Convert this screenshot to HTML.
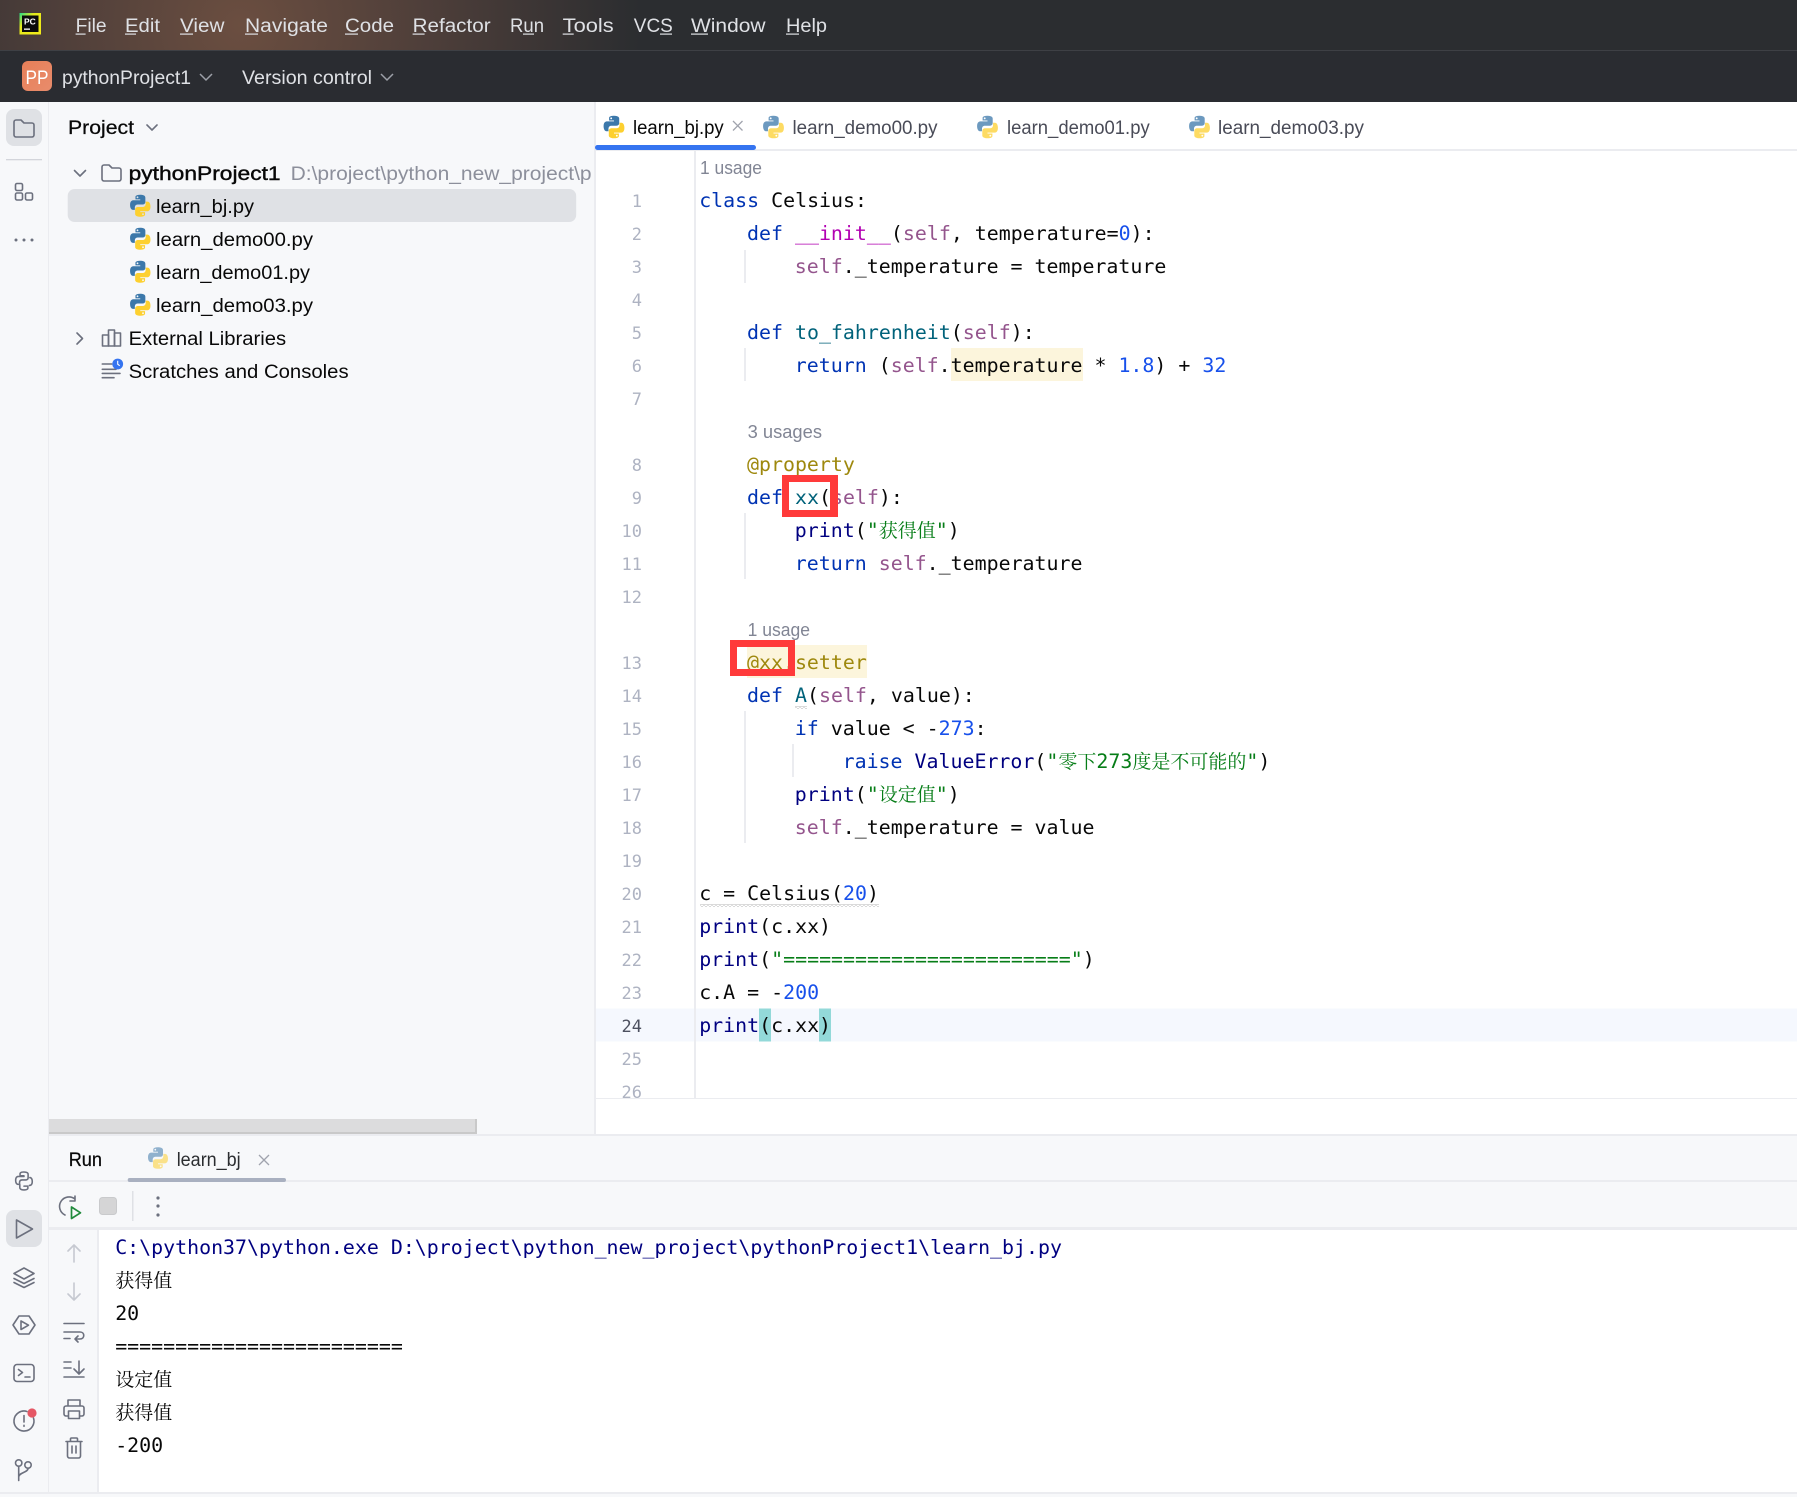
<!DOCTYPE html>
<html lang="zh"><head><meta charset="utf-8"><title>PyCharm</title>
<style>
html,body{margin:0;padding:0;background:#fff;width:1797px;height:1497px;overflow:hidden}
svg{display:block;white-space:pre}
.u{font-family:"Liberation Sans","Noto Sans CJK SC",sans-serif;font-size:19px}
.m{font-family:"DejaVu Sans Mono","Noto Serif CJK SC",monospace;font-size:19.92px;fill:#080808}
.n{font-family:"DejaVu Sans Mono",monospace;font-size:17px;fill:#aeb3c2;text-anchor:end}
.c{font-family:"Noto Serif CJK SC",serif;font-size:19px}
.k{fill:#0033b3}.s{fill:#94558d}.f{fill:#00627a}.d{fill:#b200b2}.b{fill:#000080}.i{fill:#1750eb}.g{fill:#067d17}.a{fill:#9e880d}
.h{font-family:"Liberation Sans",sans-serif;font-size:18px;fill:#818594}
.w{fill:#dfe1e5}.t{fill:#080808}.p{fill:#494b57}
.ic{fill:none;stroke:#6c707e;stroke-width:1.6;stroke-linecap:round;stroke-linejoin:round}
.dis{fill:none;stroke:#c6c9d1;stroke-width:1.6;stroke-linecap:round;stroke-linejoin:round}
</style></head><body>
<svg width="1797" height="1497" viewBox="0 0 1797 1497" xmlns="http://www.w3.org/2000/svg">
<defs>
<radialGradient id="tb" gradientUnits="userSpaceOnUse" cx="240" cy="25" r="400"><stop offset="0" stop-color="#6b4e40"/><stop offset=".45" stop-color="#4f3f3a"/><stop offset="1" stop-color="#2b2d30"/></radialGradient>
<linearGradient id="pc" x1="0" y1="0" x2="1" y2="1"><stop offset="0" stop-color="#21d789"/><stop offset=".35" stop-color="#e6ea1c"/><stop offset="1" stop-color="#f2ea1a"/></linearGradient>
<linearGradient id="pp" x1="0" y1="0" x2="1" y2="1"><stop offset="0" stop-color="#e77f58"/><stop offset="1" stop-color="#e88c6c"/></linearGradient>
<symbol id="py" viewBox="0 0 24 24">
<path fill="#3c78aa" fill-rule="evenodd" d="M11.9 1.2C6.9 1.2 7.3 3.4 7.3 3.4v2.4H12v.8H5.4S2 6.2 2 11.2s2.9 4.9 2.9 4.9h1.8v-2.4s-.1-2.9 2.9-2.9h4.7s2.7 0 2.7-2.6V4s.4-2.8-5.1-2.8zM9.3 2.8a.9.9 0 1 1 0 1.8.9.9 0 0 1 0-1.8z"/>
<path fill="#fdd02f" fill-rule="evenodd" d="M12.1 22.8c5 0 4.6-2.2 4.6-2.2v-2.4H12v-.8h6.6s3.4.4 3.4-4.6-2.9-4.9-2.9-4.9h-1.8v2.4s.1 2.9-2.9 2.9H9.7s-2.7 0-2.7 2.6V20s-.4 2.8 5.1 2.8zM14.7 21.2a.9.9 0 1 1 0-1.8.9.9 0 0 1 0 1.8z"/>
</symbol>
<pattern id="wv" width="4" height="3" patternUnits="userSpaceOnUse"><path d="M0 2.5L2 .5L4 2.5" fill="none" stroke="#b4b4b4" stroke-width=".7"/></pattern>
</defs>

<!-- backgrounds -->
<rect width="1797" height="1497" fill="#fff"/>
<rect width="1797" height="50" fill="#2b2d30"/>
<rect width="800" height="50" fill="url(#tb)"/>
<rect y="50" width="1797" height="1" fill="#3e4045"/>
<rect y="51" width="1797" height="51" fill="#2a2c31"/>
<rect y="102" width="595" height="1032" fill="#f7f8fa"/>
<rect y="102" width="49" height="1395" fill="#f7f8fa"/>
<rect x="48" y="102" width="1" height="1395" fill="#ebecf0"/>
<rect x="594" y="102" width="2" height="1032" fill="#ebecf0"/>
<rect x="596" y="149" width="1201" height="2" fill="#ebecf0"/>
<rect x="694" y="151" width="2" height="947" fill="#ebecf0"/>
<rect x="596" y="1098" width="1201" height="1" fill="#ebecf0"/>
<rect x="49" y="1134" width="1748" height="95" fill="#f7f8fa"/>
<rect x="49" y="1134" width="1748" height="2" fill="#ebecf0"/>
<rect x="49" y="1180" width="1748" height="2" fill="#ebecf0"/>
<rect x="49" y="1227" width="1748" height="3" fill="#ebecf0"/>
<rect x="49" y="1230" width="48" height="262" fill="#f7f8fa"/>
<rect x="97" y="1230" width="2" height="262" fill="#ebecf0"/>
<rect y="1492" width="1797" height="2" fill="#ebecf0"/>
<rect y="1494" width="1797" height="3" fill="#f7f8fa"/>
<rect x="49" y="1119" width="428" height="15" fill="#c9c9c9"/>
<rect x="49" y="1119" width="426" height="13" fill="#dcdcdd"/>

<!-- title bar -->
<rect x="19.5" y="13" width="21.5" height="21.5" fill="url(#pc)"/>
<rect x="22" y="15.5" width="16.5" height="16.5" fill="#0b0b0b"/>
<text x="24" y="24.5" font-family="Liberation Sans,sans-serif" font-size="8.5" font-weight="700" fill="#fff">PC</text>
<rect x="24" y="28.5" width="6" height="1.3" fill="#fff"/>
<text x="75.6" y="32" textLength="31" lengthAdjust="spacingAndGlyphs" class="u w">File</text>
<text x="125" y="32" textLength="35" lengthAdjust="spacingAndGlyphs" class="u w">Edit</text>
<text x="180" y="32" textLength="44.5" lengthAdjust="spacingAndGlyphs" class="u w">View</text>
<text x="245" y="32" textLength="83" lengthAdjust="spacingAndGlyphs" class="u w">Navigate</text>
<text x="345" y="32" textLength="49" lengthAdjust="spacingAndGlyphs" class="u w">Code</text>
<text x="412.6" y="32" textLength="78" lengthAdjust="spacingAndGlyphs" class="u w">Refactor</text>
<text x="510" y="32" textLength="34" lengthAdjust="spacingAndGlyphs" class="u w">Run</text>
<text x="562.7" y="32" textLength="51" lengthAdjust="spacingAndGlyphs" class="u w">Tools</text>
<text x="633.8" y="32" textLength="39" lengthAdjust="spacingAndGlyphs" class="u w">VCS</text>
<text x="691" y="32" textLength="74.5" lengthAdjust="spacingAndGlyphs" class="u w">Window</text>
<text x="786" y="32" textLength="41" lengthAdjust="spacingAndGlyphs" class="u w">Help</text>
<g fill="#dfe1e5">
<rect x="75.6" y="33.5" width="10" height="1.2"/><rect x="125" y="33.5" width="11" height="1.2"/><rect x="180" y="33.5" width="13" height="1.2"/><rect x="245" y="33.5" width="13" height="1.2"/><rect x="345" y="33.5" width="13" height="1.2"/><rect x="412.6" y="33.5" width="12" height="1.2"/><rect x="523" y="33.5" width="11" height="1.2"/><rect x="562.7" y="33.5" width="11" height="1.2"/><rect x="660" y="33.5" width="12" height="1.2"/><rect x="691" y="33.5" width="17" height="1.2"/><rect x="786" y="33.5" width="13" height="1.2"/>
</g>
<rect x="22" y="61" width="30" height="30" rx="6" fill="url(#pp)"/>
<text x="25.5" y="84" textLength="23" lengthAdjust="spacingAndGlyphs" class="u" fill="#fff">PP</text>
<text x="62" y="84" textLength="129" lengthAdjust="spacingAndGlyphs" class="u w">pythonProject1</text>
<text x="242" y="84" textLength="130" lengthAdjust="spacingAndGlyphs" class="u w">Version control</text>
<path d="M200 74l6 6 6-6M381 74l6 6 6-6" fill="none" stroke="#9da0a8" stroke-width="1.5"/>

<!-- left stripe -->
<rect x="6" y="109" width="36" height="37" rx="8" fill="#dfe1e5"/>
<path class="ic" d="M14 122a2 2 0 0 1 2-2h5l3 3h8a2 2 0 0 1 2 2v10a2 2 0 0 1-2 2H16a2 2 0 0 1-2-2z"/>
<rect x="6" y="159" width="36" height="1.3" fill="#d3d5db"/>
<g class="ic"><rect x="15.5" y="183.5" width="7" height="7" rx="1.5"/><rect x="15.5" y="193" width="7" height="7" rx="1.5"/><rect x="25.5" y="193" width="7" height="7" rx="1.5"/></g>
<g fill="#6c707e"><circle cx="16" cy="240" r="1.5"/><circle cx="24" cy="240" r="1.5"/><circle cx="32" cy="240" r="1.5"/></g>

<g class="ic">
<g transform="translate(14 1171) scale(.83)"><path d="M11.9 1.2C6.9 1.2 7.3 3.4 7.3 3.4v2.4H12v.8H5.4S2 6.2 2 11.2s2.9 4.9 2.9 4.9h1.8v-2.4s-.1-2.9 2.9-2.9h4.7s2.7 0 2.7-2.6V4s.4-2.8-5.1-2.8z" stroke-width="1.9"/><path d="M12.1 22.8c5 0 4.6-2.2 4.6-2.2v-2.4H12M19.1 7.9s2.9-.1 2.9 4.9-3.4 4.6-3.4 4.6M7 16.5V20s-.4 2.8 5.1 2.8" stroke-width="1.9"/></g>
</g>
<rect x="6" y="1210" width="36" height="37" rx="8" fill="#dfe1e5"/>
<g class="ic">
<path d="M16.5 1220v18l16-9z"/>
<path d="M24 1268l10 5.5-10 5.5-10-5.5z"/><path d="M14 1278.5l10 5 10-5M14 1282.5l10 5 10-5" />
<path d="M19 1316h10l6 9-6 9H19l-6-9z"/><path d="M21 1321v8.5l7.5-4.3z"/>
<rect x="14" y="1364.5" width="20" height="17" rx="3"/><path d="M18.5 1369.5l4 3-4 3M25 1377h5"/>
<path d="M27 1411.5a10 10 0 1 0 6.5 6.5"/><path d="M24 1415.5v6.5M24 1425.3v1"/>
<circle cx="18.7" cy="1463" r="3.2"/><circle cx="28" cy="1465" r="3.2"/><path d="M18.7 1466.500v14M28 1468.500c0 4-9.300 4-9.300 8.500"/>
</g>
<circle cx="32" cy="1413" r="4.6" fill="#e55765"/>

<!-- project panel -->
<text x="68" y="134" textLength="66" lengthAdjust="spacingAndGlyphs" class="u t" stroke="#080808" stroke-width=".25">Project</text>
<path class="ic" d="M147 125l5 5 5-5"/>
<rect x="67.7" y="189" width="508.5" height="33" rx="7" fill="#dfe1e5"/>
<path class="ic" d="M74.5 170.5l5.5 5.5 5.5-5.5"/>
<path class="ic" d="M102 167a2 2 0 0 1 2-2h5l3 3h7a2 2 0 0 1 2 2v9a2 2 0 0 1-2 2h-15a2 2 0 0 1-2-2z"/>
<text x="128.6" y="180" textLength="152" lengthAdjust="spacingAndGlyphs" class="u t" stroke="#080808" stroke-width=".4">pythonProject1</text>
<text x="290.6" y="180" textLength="301" lengthAdjust="spacingAndGlyphs" class="u" fill="#8c8f9b">D:\project\python_new_project\p</text>
<use href="#py" x="128" y="193.5" width="24.5" height="24.5"/>
<use href="#py" x="128" y="226.5" width="24.5" height="24.5"/>
<use href="#py" x="128" y="259.5" width="24.5" height="24.5"/>
<use href="#py" x="128" y="292.5" width="24.5" height="24.5"/>
<text x="156" y="213" textLength="98" lengthAdjust="spacingAndGlyphs" class="u t">learn_bj.py</text>
<text x="156" y="246" textLength="157" lengthAdjust="spacingAndGlyphs" class="u t">learn_demo00.py</text>
<text x="156" y="279" textLength="154" lengthAdjust="spacingAndGlyphs" class="u t">learn_demo01.py</text>
<text x="156" y="312" textLength="157" lengthAdjust="spacingAndGlyphs" class="u t">learn_demo03.py</text>
<path class="ic" d="M77 333l5.5 5.5-5.5 5.5"/>
<g class="ic"><rect x="102.5" y="335" width="6" height="11"/><rect x="108.5" y="330" width="6" height="16"/><rect x="114.5" y="333" width="6" height="13"/></g>
<text x="128.6" y="345" textLength="157.5" lengthAdjust="spacingAndGlyphs" class="u t">External Libraries</text>
<path class="ic" d="M102.3 364h9.4M102.3 369.3h13.7M102.3 373.4h17.7M102.3 377.7h11.7"/>
<circle cx="117.7" cy="364" r="5.4" fill="#3574f0"/><path d="M117.7 360.8v3.4l2 1.5" fill="none" stroke="#fff" stroke-width="1.1"/>
<text x="128.6" y="378" textLength="220" lengthAdjust="spacingAndGlyphs" class="u t">Scratches and Consoles</text>

<!-- tabs -->
<use href="#py" x="601.500" y="114.500" width="25" height="25"/>
<text x="633" y="134" textLength="90.7" lengthAdjust="spacingAndGlyphs" class="u t">learn_bj.py</text>
<path d="M733 121l9.5 9.5M742.5 121l-9.500 9.500" fill="none" stroke="#a0a3ad" stroke-width="1.3"/>
<rect x="595" y="145" width="161" height="5" rx="2.5" fill="#3574f0"/>
<use href="#py" x="761" y="114.500" width="25" height="25" opacity=".75"/>
<text x="792.500" y="134" textLength="145" lengthAdjust="spacingAndGlyphs" class="u p">learn_demo00.py</text>
<use href="#py" x="975" y="114.500" width="25" height="25" opacity=".75"/>
<text x="1007" y="134" textLength="142.700" lengthAdjust="spacingAndGlyphs" class="u p">learn_demo01.py</text>
<use href="#py" x="1187" y="114.500" width="25" height="25" opacity=".75"/>
<text x="1218" y="134" textLength="146" lengthAdjust="spacingAndGlyphs" class="u p">learn_demo03.py</text>

<!-- editor highlights -->
<rect x="596" y="1008.500" width="1201" height="33" fill="#f5f8fe"/>
<rect x="694" y="1008.500" width="2" height="33" fill="#ebecf0"/>
<rect x="951" y="348" width="132" height="33" fill="#fcf5dc"/>
<rect x="747" y="645" width="120" height="33" fill="#fcf5dc"/>
<rect x="759" y="1008.500" width="12" height="33" fill="#93d9d9"/>
<rect x="819" y="1008.500" width="12" height="33" fill="#93d9d9"/>
<g fill="#ebecf0">
<rect x="744" y="250" width="2" height="33"/><rect x="744" y="348" width="2" height="33"/><rect x="744" y="513" width="2" height="66"/><rect x="744" y="711" width="2" height="132"/><rect x="792" y="744" width="2" height="33"/>
</g>
<rect x="700" y="904" width="179" height="3" fill="url(#wv)"/>
<rect x="795" y="706" width="12" height="3" fill="url(#wv)"/>

<!-- line numbers -->
<text class="n" x="642" y="207">1</text><text class="n" x="642" y="240">2</text><text class="n" x="642" y="273">3</text><text class="n" x="642" y="306">4</text><text class="n" x="642" y="339">5</text><text class="n" x="642" y="372">6</text><text class="n" x="642" y="405">7</text><text class="n" x="642" y="471">8</text><text class="n" x="642" y="504">9</text><text class="n" x="642" y="537">10</text><text class="n" x="642" y="570">11</text><text class="n" x="642" y="603">12</text><text class="n" x="642" y="669">13</text><text class="n" x="642" y="702">14</text><text class="n" x="642" y="735">15</text><text class="n" x="642" y="768">16</text><text class="n" x="642" y="801">17</text><text class="n" x="642" y="834">18</text><text class="n" x="642" y="867">19</text><text class="n" x="642" y="900">20</text><text class="n" x="642" y="933">21</text><text class="n" x="642" y="966">22</text><text class="n" x="642" y="999">23</text><text class="n" x="642" y="1032" style="fill:#4d5160">24</text><text class="n" x="642" y="1065">25</text><text class="n" x="642" y="1098">26</text>

<!-- code -->
<text x="700" y="174" textLength="62" lengthAdjust="spacingAndGlyphs" class="h">1 usage</text>
<text class="m" x="699.2" y="207"><tspan class="k">class</tspan> Celsius:</text>
<text class="m" x="747" y="240"><tspan class="k">def</tspan> <tspan class="d">__init__</tspan>(<tspan class="s">self</tspan>, temperature=<tspan class="i">0</tspan>):</text>
<text class="m" x="794.8" y="273"><tspan class="s">self</tspan>._temperature = temperature</text>
<text class="m" x="747" y="339"><tspan class="k">def</tspan> <tspan class="f">to_fahrenheit</tspan>(<tspan class="s">self</tspan>):</text>
<text class="m" x="794.8" y="372"><tspan class="k">return</tspan> (<tspan class="s">self</tspan>.temperature * <tspan class="i">1.8</tspan>) + <tspan class="i">32</tspan></text>
<text x="747.6" y="438" textLength="74.400" lengthAdjust="spacingAndGlyphs" class="h">3 usages</text>
<text class="m" x="747" y="471" style="fill:#9e880d">@property</text>
<text class="m" x="747" y="504"><tspan class="k">def</tspan> <tspan class="f">xx</tspan>(<tspan class="s">self</tspan>):</text>
<text class="m" x="794.8" y="537"><tspan class="b">print</tspan>(<tspan class="g">"<tspan class="c">获得值</tspan>"</tspan>)</text>
<text class="m" x="794.8" y="570"><tspan class="k">return</tspan> <tspan class="s">self</tspan>._temperature</text>
<text x="747.6" y="636" textLength="62.400" lengthAdjust="spacingAndGlyphs" class="h">1 usage</text>
<text class="m" x="747" y="669" style="fill:#9e880d">@xx.setter</text>
<text class="m" x="747" y="702"><tspan class="k">def</tspan> <tspan class="f">A</tspan>(<tspan class="s">self</tspan>, value):</text>
<text class="m" x="794.8" y="735"><tspan class="k">if</tspan> value &lt; -<tspan class="i">273</tspan>:</text>
<text class="m" x="842.6" y="768"><tspan class="k">raise</tspan> <tspan class="b">ValueError</tspan>(<tspan class="g">"<tspan class="c">零下</tspan>273<tspan class="c">度是不可能的</tspan>"</tspan>)</text>
<text class="m" x="794.8" y="801"><tspan class="b">print</tspan>(<tspan class="g">"<tspan class="c">设定值</tspan>"</tspan>)</text>
<text class="m" x="794.8" y="834"><tspan class="s">self</tspan>._temperature = value</text>
<text class="m" x="699.2" y="900">c = Celsius(<tspan class="i">20</tspan>)</text>
<text class="m" x="699.2" y="933"><tspan class="b">print</tspan>(c.xx)</text>
<text class="m" x="699.2" y="966"><tspan class="b">print</tspan>(<tspan class="g">"========================"</tspan>)</text>
<text class="m" x="699.2" y="999">c.A = -<tspan class="i">200</tspan></text>
<text class="m" x="699.2" y="1032"><tspan class="b">print</tspan>(c.xx)</text>

<!-- red boxes -->
<path fill="#ff3a3a" fill-rule="evenodd" d="M782 475h56v42h-56zM789 482v28h41v-28z"/>
<path fill="#ff3a3a" fill-rule="evenodd" d="M730 640h65v36h-65zM737 647v22h51v-22z"/>
<rect x="737" y="647" width="10" height="22" fill="#fff"/>

<!-- run tool window -->
<text x="68.700" y="1166" textLength="33.300" lengthAdjust="spacingAndGlyphs" class="u t" stroke="#080808" stroke-width=".25">Run</text>
<use href="#py" x="146" y="1146" width="24" height="24" opacity=".55"/>
<text x="176.700" y="1166" textLength="64" lengthAdjust="spacingAndGlyphs" class="u" fill="#2b2d30">learn_bj</text>
<path d="M259 1155l10 10M269 1155l-10 10" fill="none" stroke="#a0a3ad" stroke-width="1.3"/>
<rect x="127.700" y="1178" width="158.300" height="4" rx="2" fill="#a9b0c0"/>

<path class="ic" d="M75 1199a9.500 9.500 0 1 0-10 16M75 1196v5h-5"/>
<path d="M71.500 1207v11.500l9-5.700z" fill="none" stroke="#208a3c" stroke-width="1.700" stroke-linejoin="round"/>
<rect x="99.500" y="1197.500" width="17" height="17" rx="3" fill="#d5d5d6" stroke="#c9cacc"/>
<rect x="132" y="1191" width="1.500" height="30" fill="#dfe1e5"/>
<g fill="#6c707e"><circle cx="158" cy="1198" r="1.600"/><circle cx="158" cy="1206" r="1.600"/><circle cx="158" cy="1215" r="1.600"/></g>

<path class="dis" d="M74 1245v17M68 1251l6-6 6 6M74 1283v17M68 1294l6 6 6-6"/>
<g class="ic">
<path d="M64 1323.500h20M64 1332h16c5 0 5 7 0 7h-5M64 1338.500h6M78 1336l-3 3 3 3"/>
<path d="M64 1362h7M64 1368h7M64 1377h20M79 1361v12M74 1369l5 5 5-5"/>
<path d="M68 1406v-6h12v6M68 1416h-2a2 2 0 0 1-2-2v-6a2 2 0 0 1 2-2h16a2 2 0 0 1 2 2v6a2 2 0 0 1-2 2h-2"/><rect x="68.500" y="1411" width="11" height="7.500"/>
<path d="M66 1441.500h16M70.500 1441v-2a1 1 0 0 1 1-1h5a1 1 0 0 1 1 1v2M67.500 1442v14a2 2 0 0 0 2 2h9a2 2 0 0 0 2-2v-14M72 1446v7M76 1446v7"/>
</g>

<!-- console -->
<text class="m" x="115.200" y="1254" style="fill:#000080">C:\python37\python.exe D:\project\python_new_project\pythonProject1\learn_bj.py</text>
<text class="m" x="115.200" y="1287"><tspan class="c">获得值</tspan></text>
<text class="m" x="115.200" y="1320">20</text>
<text class="m" x="115.200" y="1353">========================</text>
<text class="m" x="115.200" y="1386"><tspan class="c">设定值</tspan></text>
<text class="m" x="115.200" y="1419"><tspan class="c">获得值</tspan></text>
<text class="m" x="115.200" y="1452">-200</text>
</svg>
</body></html>
